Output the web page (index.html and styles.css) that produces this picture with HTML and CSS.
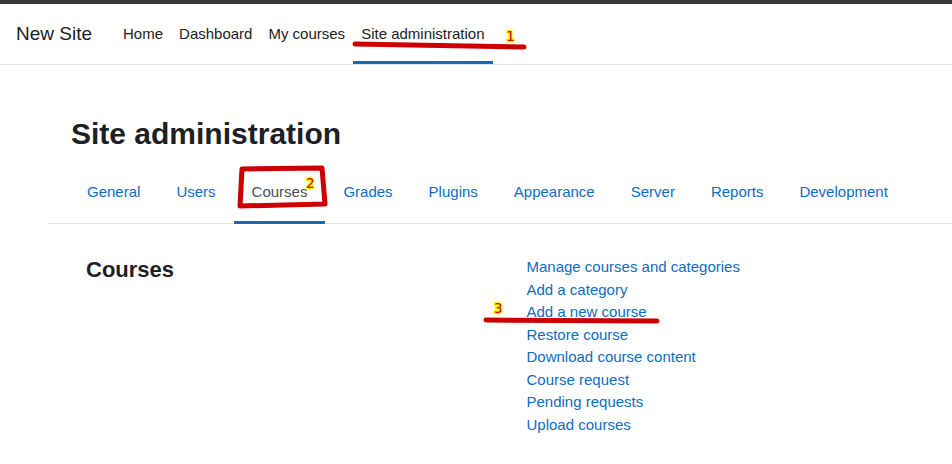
FILE: index.html
```html
<!DOCTYPE html>
<html lang="en">
<head>
<meta charset="utf-8">
<meta name="viewport" content="width=device-width, initial-scale=1">
<title>Site administration</title>
<link rel="stylesheet" href="styles.css">
</head>
<body>
<header class="navbar">
  <a class="brand" href="#">New Site</a>
  <nav class="primary">
    <a class="nav-link" href="#">Home</a>
    <a class="nav-link" href="#">Dashboard</a>
    <a class="nav-link" href="#">My courses</a>
    <a class="nav-link current" href="#">Site administration
      <svg class="mark mark-one" width="184" height="34" viewBox="0 0 184 34" aria-hidden="true">
        <path d="M7 21L176 24"/>
        <text x="158" y="18">1</text>
      </svg>
    </a>
  </nav>
</header>
<main class="page">
  <h1 class="title">Site administration</h1>
  <nav class="tabs">
    <a class="tab" href="#">General</a>
    <a class="tab" href="#">Users</a>
    <a class="tab active" href="#">Courses
      <svg class="mark mark-two" width="100" height="50" viewBox="0 0 100 50" aria-hidden="true">
        <path d="M12 9L92 8L95 44L10 46Z"/>
        <text x="76" y="28">2</text>
      </svg>
    </a>
    <a class="tab" href="#">Grades</a>
    <a class="tab" href="#">Plugins</a>
    <a class="tab" href="#">Appearance</a>
    <a class="tab" href="#">Server</a>
    <a class="tab" href="#">Reports</a>
    <a class="tab" href="#">Development</a>
  </nav>
  <section class="panel">
    <h2 class="section-title">Courses</h2>
    <ul class="links">
      <li><a href="#">Manage courses and categories</a></li>
      <li><a href="#">Add a category</a></li>
      <li class="marked"><a href="#">Add a new course</a>
        <svg class="mark mark-three" width="184" height="34" viewBox="0 0 184 34" aria-hidden="true">
          <path d="M7 25L178 26"/>
          <text x="15" y="18">3</text>
        </svg>
      </li>
      <li><a href="#">Restore course</a></li>
      <li><a href="#">Download course content</a></li>
      <li><a href="#">Course request</a></li>
      <li><a href="#">Pending requests</a></li>
      <li><a href="#">Upload courses</a></li>
    </ul>
  </section>
</main>
</body>
</html>
```
FILE: styles.css
```css
* {
  box-sizing: border-box;
}

body {
  margin: 0;
  background: #fff;
  color: #1d2125;
  font-family: "Liberation Sans", Arial, sans-serif;
  font-size: 15px;
  line-height: 1.5;
}

a {
  color: #0f6cbf;
  text-decoration: none;
}

.navbar {
  display: flex;
  align-items: stretch;
  height: 65px;
  padding: 0 16px;
  border-top: 4px solid #373737;
  border-bottom: 1px solid #dee2e6;
}

.brand {
  display: flex;
  align-items: center;
  margin-right: 23px;
  color: #1d2125;
  font-size: 19px;
}

.primary {
  display: flex;
}

.nav-link {
  position: relative;
  display: flex;
  align-items: center;
  padding: 0 8px;
  border-top: 3px solid transparent;
  border-bottom: 3px solid transparent;
  color: #1d2125;
  white-space: nowrap;
}

.nav-link.current {
  border-bottom-color: #0f6cbf;
}

.page {
  padding: 47px 0 24px 48px;
}

.title {
  margin: 0 0 24px 23px;
  font-size: 30px;
  line-height: 44px;
}

.tabs {
  display: flex;
  padding-left: 21px;
  border-bottom: 1px solid #dee2e6;
}

.tab {
  position: relative;
  margin-bottom: -1px;
  padding: 0 18px 17px;
  border-bottom: 3px solid transparent;
  line-height: 24px;
  white-space: nowrap;
}

.tab.active {
  border-bottom-color: #0f6cbf;
  color: #495057;
}

.panel {
  display: grid;
  grid-template-columns: 1fr 1fr;
  margin-top: 32px;
  padding-left: 23px;
}

.section-title {
  margin: 0;
  padding: 0 15px;
  font-size: 22px;
  line-height: 28px;
}

.links {
  margin: 0;
  padding: 0 15px;
  list-style: none;
}

.marked {
  position: relative;
}

/* Hand-drawn step markers laid over the page */
.mark {
  position: absolute;
  overflow: visible;
  pointer-events: none;
}

.mark path {
  fill: none;
  stroke: #c00;
  stroke-width: 5;
  stroke-linecap: round;
  stroke-linejoin: round;
}

.mark text {
  fill: #c00;
  stroke: #ff0;
  stroke-width: 3;
  stroke-linejoin: round;
  paint-order: stroke;
  font-family: "DejaVu Sans Mono", monospace;
  font-size: 14px;
}

.mark-one {
  top: 16px;
  left: -5px;
}

.mark-two {
  top: -20px;
  left: -4px;
}

.mark-three {
  top: -6px;
  left: -48px;
}
```
